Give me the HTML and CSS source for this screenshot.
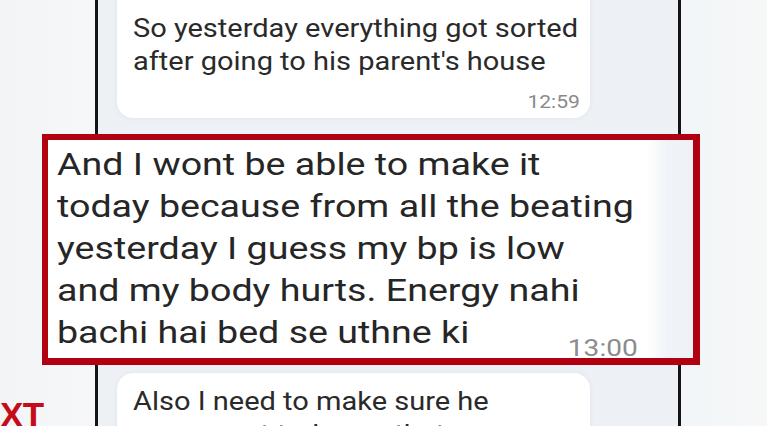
FILE: index.html
```html
<!DOCTYPE html>
<html lang="en">
<head>
<meta charset="utf-8">
<title>Chat screenshot</title>
<link rel="stylesheet" href="styles.css">
</head>
<body>
<div class="stage">
  <div class="phone">
    <div class="bubble bubble-top">
      <div class="txt">So yesterday everything got sorted<br>after going to his parent's house</div>
      <div class="time"><span class="time-s">12:59</span></div>
    </div>
    <div class="highlight">
      <div class="big">And I wont be able to make it<br>today because from all the beating<br>yesterday I guess my bp is low<br>and my body hurts. Energy nahi<br>bachi hai bed se uthne ki</div>
      <div class="big-time"><span class="big-time-s">13:00</span></div>
    </div>
    <div class="bubble bubble-bottom">
      <div class="txt">Also I need to make sure he<br>comes out today so that</div>
    </div>
  </div>
  <div class="logo">XT</div>
</div>
</body>
</html>
```
FILE: styles.css
```css
html, body {
  margin: 0;
  padding: 0;
  background: #f3f5f6;
}
.stage {
  position: relative;
  width: 767px;
  height: 426px;
  overflow: hidden;
  background: linear-gradient(to right, #f2f4f5 0, #f5f7f8 90px, #f3f6f8 700px, #f6f8f8 767px);
  font-family: Roboto, "Noto Sans", sans-serif;
  color: #262626;
}
.phone {
  margin-left: 95px;
  width: 580px;
  height: 460px;
  border-left: 3px solid #141414;
  border-right: 3px solid #141414;
  background: #edf1f6;
  display: flex;
  flex-direction: column;
  align-items: flex-start;
}
.bubble {
  box-sizing: border-box;
  width: 473px;
  margin-left: 19px;
  background: #ffffff;
  border-radius: 16px;
  box-shadow: 0 0 4px rgba(220, 226, 234, 0.9);
}
.bubble-top {
  margin-top: -20px;
  padding: 32px 10px 5px 16px;
}
.bubble-bottom {
  margin-top: 8px;
  padding: 12px 10px 10px 16px;
}
.txt {
  font-size: 25px;
  line-height: 33px;
  white-space: nowrap;
  color: #2a2a2a;
  transform: scaleX(1.16);
  transform-origin: left top;
}
.time {
  margin-top: 13px;
  text-align: right;
  font-size: 18px;
  line-height: 22px;
  color: #8a8a8a;
}
.time-s {
  display: inline-block;
  transform: scaleX(1.17);
  transform-origin: right top;
}
.highlight {
  box-sizing: border-box;
  align-self: stretch;
  margin: 16px -22px 0 -56px;
  border-style: solid;
  border-color: #b1000f;
  border-width: 6px 7px 7px 6px;
  padding: 3px 0 0 9px;
  background: linear-gradient(to right, #ffffff 0, #ffffff 598px, #f0f4f8 620px, #eef2f7 645px);
}
.big {
  font-size: 32px;
  line-height: 42px;
  white-space: nowrap;
  color: #262626;
  transform: scaleX(1.175);
  transform-origin: left top;
}
.big-time {
  margin-top: -15px;
  margin-right: 55px;
  text-align: right;
  font-size: 24px;
  line-height: 20px;
  color: #8c8c8c;
}
.big-time-s {
  display: inline-block;
  transform: scaleX(1.17);
  transform-origin: right top;
}
.logo {
  position: absolute;
  left: 0;
  top: 395px;
  font-family: "Liberation Sans", Arial, sans-serif;
  font-weight: bold;
  font-size: 35px;
  line-height: 40px;
  color: #c40d18;
  letter-spacing: -0.5px;
}
```
